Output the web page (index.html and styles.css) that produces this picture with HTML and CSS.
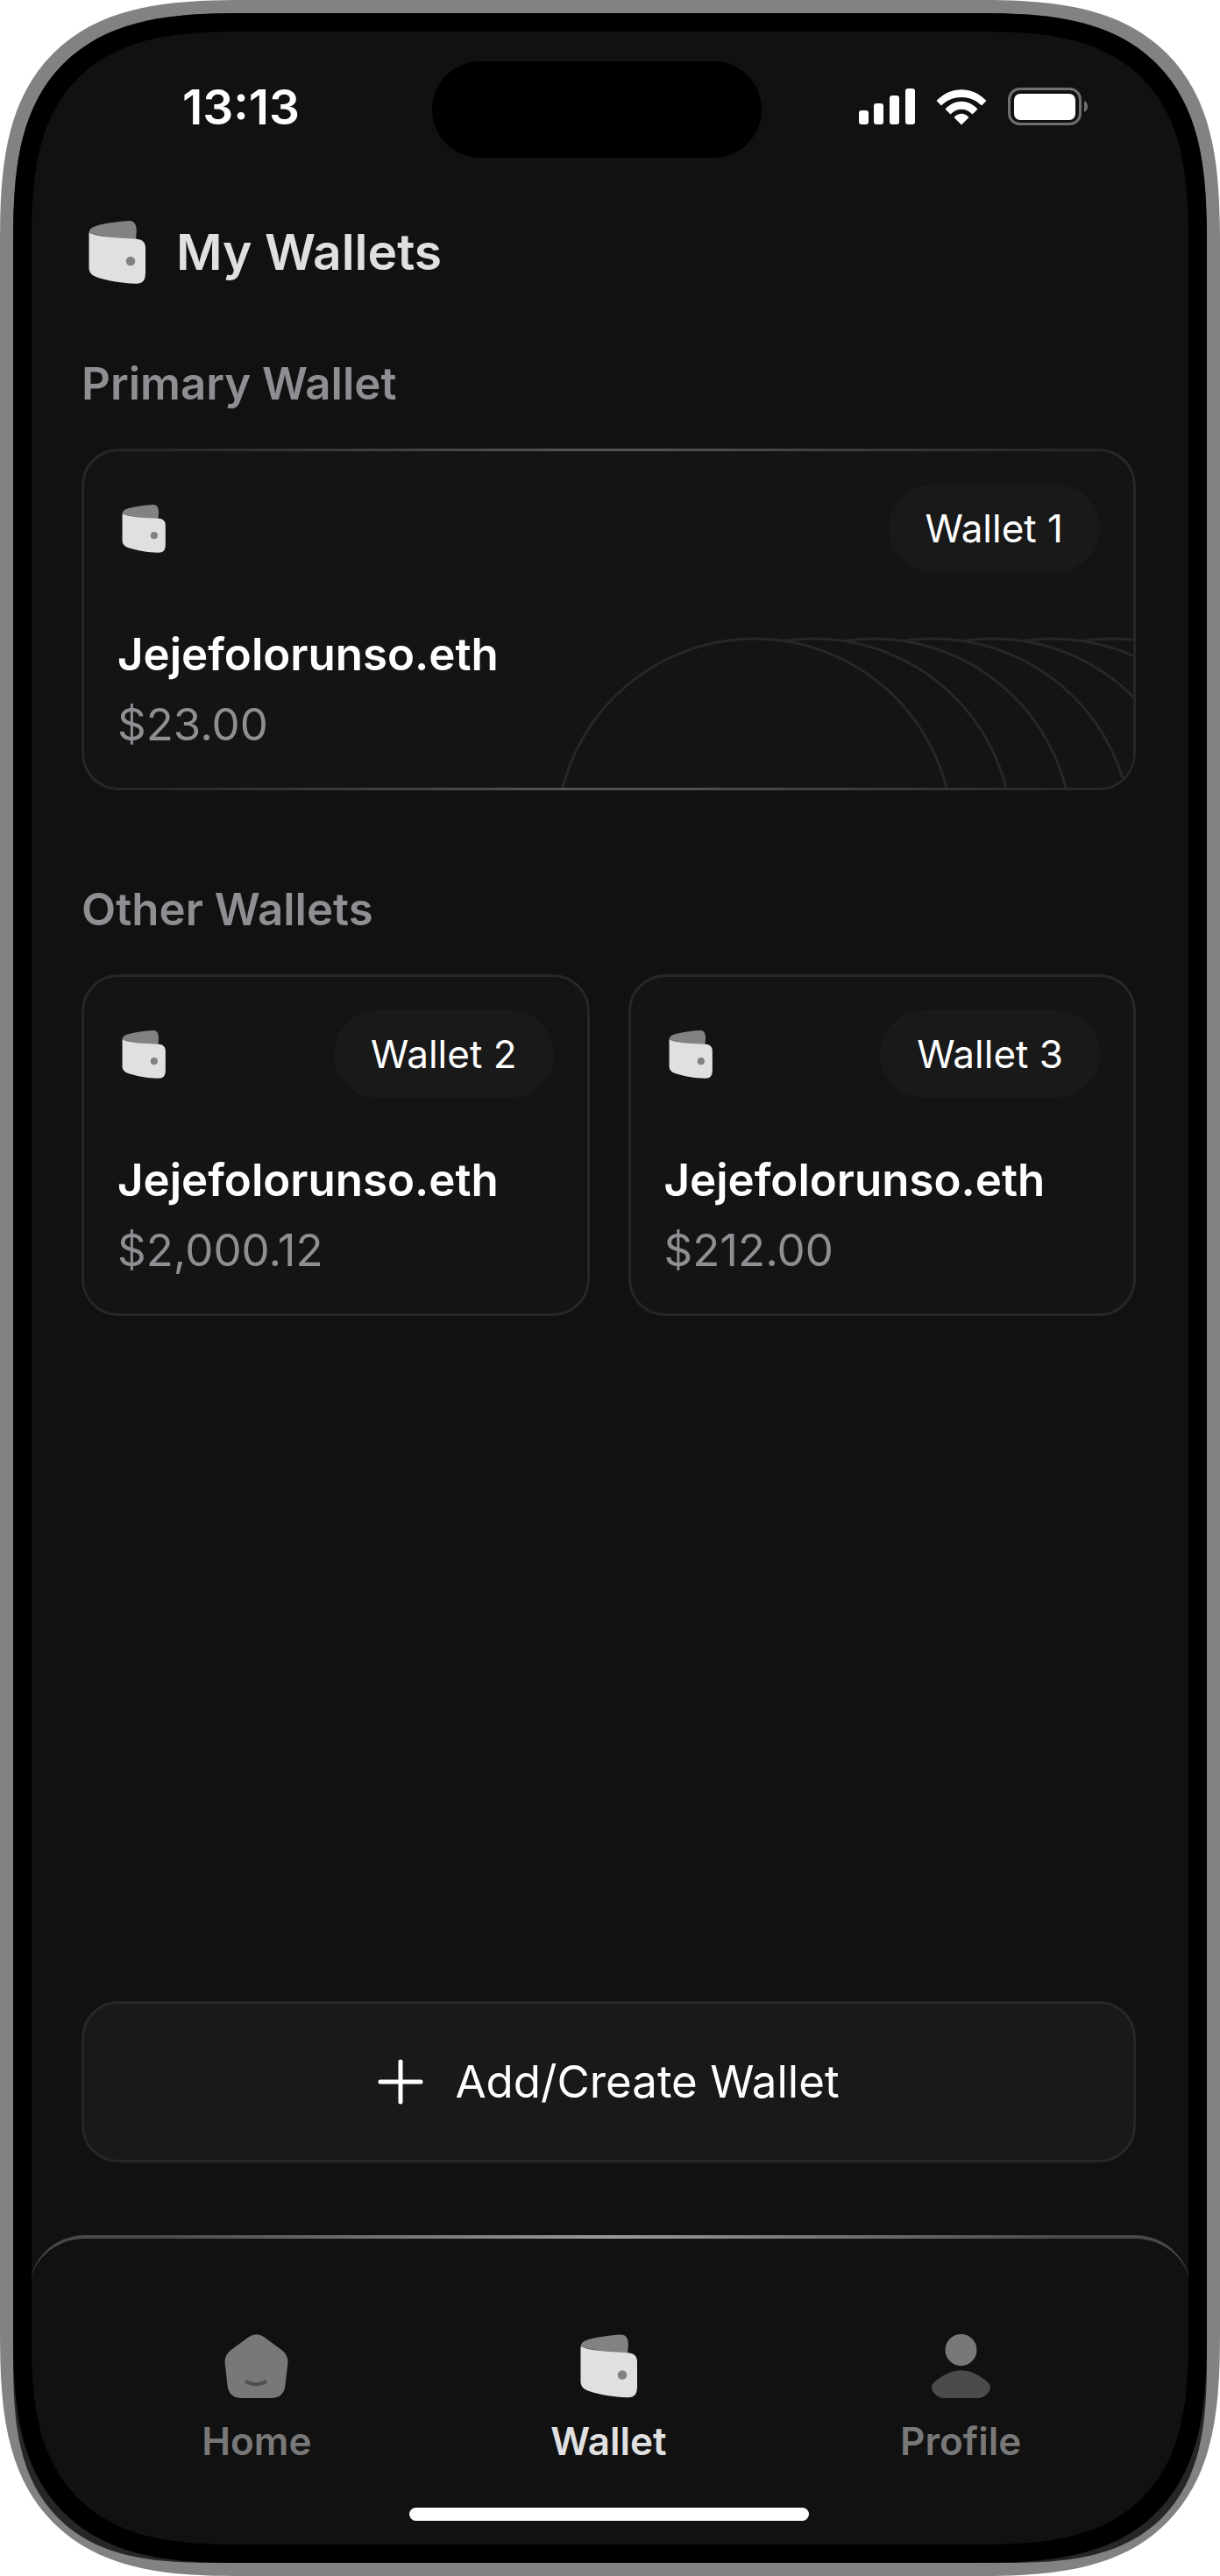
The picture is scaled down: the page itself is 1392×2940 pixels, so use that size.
FILE: index.html
```html
<!DOCTYPE html>
<html lang="en">
<head>
  <meta charset="UTF-8" />
  <meta name="viewport" content="width=device-width, initial-scale=1.0" />
  <title>My Wallets</title>
  <link rel="stylesheet" href="styles.css">
</head>
<body>
  <!-- shared icons -->
  <svg class="sprite" aria-hidden="true">
    <symbol id="icon-wallet" viewBox="0 0 65 72">
      <path fill="#828282" d="M.5 14C.7 9 4 7.500 9 5.700C20 2.400 35 .8 46 0C51.500-.2 54.800 3 54.800 12L54 22L28 20Z" />
      <path fill="#e0e0e0" d="M.5 13.700C10 17 20 18.500 29.500 19.300L55 20.700C62 21.500 65 25 65 31V59C65 68 62 71.800 54 71.700C38 71.200 22 68.500 10 64.500C3 62 .5 58.500 .5 53Z" />
      <circle cx="48" cy="46" r="5.300" fill="#828282" />
    </symbol>
  </svg>

  <div class="phone">
    <div class="rim">
      <div class="bezel">
        <div class="screen">
          <div class="status-bar">
            <span class="time">13:13</span>
            <div class="island"></div>
            <div class="status-icons">
              <svg width="64" height="44" viewBox="0 0 64 44" fill="#fff">
                <rect x="0" y="26" width="11" height="16" rx="3" />
                <rect x="17" y="18" width="11" height="24" rx="3" />
                <rect x="35" y="9" width="11" height="33" rx="3" />
                <rect x="53" y="1" width="11" height="41" rx="3" />
              </svg>
              <svg width="58" height="44" viewBox="0 0 58 44" fill="#fff">
                <path d="M1 14.500C17-2 41-2 57 14.500Q57.500 15 57 15.500L52.500 20Q52 20.500 51.500 20C39 8 19 8 6.500 20Q6 20.500 5.500 20L1 15.500Q.5 15 1 14.500Z" />
                <path d="M11 24C21.500 13 36.500 13 47 24Q47.500 24.500 47 25L42 30Q41.500 30.400 41 30C34 23 24 23 17 30Q16.500 30.400 16 30L11 25Q10.500 24.500 11 24Z" />
                <path d="M21 33.500C26 28.500 32 28.500 37 33.500Q37.500 34 37 34.500L29.500 42Q29 42.500 28.500 42L21 34.500Q20.500 34 21 33.500Z" />
              </svg>
              <svg width="92" height="44" viewBox="0 0 92 44">
                <rect x="1.500" y="1.500" width="81" height="40" rx="12" fill="none" stroke="#707070" stroke-width="3" />
                <rect x="7" y="7" width="70" height="30" rx="7" fill="#fff" />
                <path d="M87 15Q91 17 91 21.500T87 28Z" fill="#707070" />
              </svg>
            </div>
          </div>

          <main class="content">
            <header class="page-header">
              <svg class="header-icon"><use href="#icon-wallet" /></svg>
              <h1>My Wallets</h1>
            </header>

            <section class="wallet-section">
              <h2>Primary Wallet</h2>
              <article class="card card-primary">
                <svg class="rings" viewBox="0 0 656 173" fill="#141414" stroke="#272727" stroke-width="3" aria-hidden="true">
                  <circle cx="632" cy="229" r="226" />
                  <circle cx="564" cy="229" r="226" />
                  <circle cx="496" cy="229" r="226" />
                  <circle cx="428" cy="229" r="226" />
                  <circle cx="360" cy="229" r="226" />
                  <circle cx="292" cy="229" r="226" />
                  <circle cx="224" cy="229" r="226" />
                </svg>
                <div class="card-top">
                  <svg class="card-icon"><use href="#icon-wallet" /></svg>
                  <span class="pill">Wallet 1</span>
                </div>
                <h3>Jejefolorunso.eth</h3>
                <p>$23.00</p>
              </article>
            </section>

            <section class="wallet-section">
              <h2>Other Wallets</h2>
              <div class="wallet-grid">
                <article class="card">
                  <div class="card-top">
                    <svg class="card-icon"><use href="#icon-wallet" /></svg>
                    <span class="pill">Wallet 2</span>
                  </div>
                  <h3>Jejefolorunso.eth</h3>
                  <p>$2,000.12</p>
                </article>
                <article class="card">
                  <div class="card-top">
                    <svg class="card-icon"><use href="#icon-wallet" /></svg>
                    <span class="pill">Wallet 3</span>
                  </div>
                  <h3>Jejefolorunso.eth</h3>
                  <p>$212.00</p>
                </article>
              </div>
            </section>

            <button class="add-button" type="button">
              <svg width="52" height="52" viewBox="0 0 52 52" fill="none" stroke="#fff" stroke-width="5" stroke-linecap="round">
                <path d="M26 3V49M3 26H49" />
              </svg>
              Add/Create Wallet
            </button>
          </main>

          <nav class="tab-bar">
            <div class="tabs">
              <a class="tab" href="#home">
                <svg width="73" height="73" viewBox="0 0 73 73">
                  <path fill="#787878" d="M28 3Q36.500-2.500 45 3L66 18.500Q73 24 72.400 33L69.500 58Q68 73 53 73H20Q5 73 3.500 58L.6 33Q0 24 7 18.500Z" />
                  <path fill="none" stroke="#505050" stroke-width="4" d="M24 53.500Q36.500 61 48 53.500" />
                </svg>
                Home
              </a>
              <a class="tab active" href="#wallet" aria-current="page">
                <svg width="65" height="73"><use href="#icon-wallet" /></svg>
                Wallet
              </a>
              <a class="tab" href="#profile">
                <svg width="67" height="73" viewBox="0 0 67 73">
                  <circle cx="33.500" cy="18" r="18" fill="#787878" />
                  <path fill="#4b4b4b" d="M33.500 41.300C43 41.300 50 45 57 49.500C63 53.500 67 56.500 67 61C67 66 60 73 53 73H14C7 73 0 66 0 61C0 56.500 4 53.500 10 49.500C17 45 24 41.300 33.500 41.300Z" />
                </svg>
                Profile
              </a>
            </div>
            <div class="home-indicator"></div>
          </nav>
        </div>
      </div>
    </div>
  </div>
</body>
</html>
```
FILE: styles.css
```css
:root {
  --frame: #828282;
  --screen: #111111;
  --card: #141414;
  --raised: #191919;
  --line: #272727;
  --muted: #8e8e93;
  --light: #e0e0e0;
}

* {
  box-sizing: border-box;
}

body {
  margin: 0;
  background: #fff;
  color: #fff;
  font-family: Inter, "Liberation Sans", sans-serif;
}

h1,
h2,
h3,
p {
  margin: 0;
}

svg {
  display: block;
  flex-shrink: 0;
}

.sprite {
  position: absolute;
  width: 0;
  height: 0;
}

/* device frame */
.phone,
.rim,
.bezel,
.screen {
  display: flex;
  flex-direction: column;
}

.rim,
.bezel,
.screen {
  flex: 1;
}

.phone {
  min-height: 100vh;
  padding: 15px;
  background: var(--frame);
  border-radius: 212px;
}

.rim {
  background: #262626;
  border-radius: 200px 200px 176px 176px;
}

.bezel {
  padding: 21px;
  background: #000;
  border-radius: 200px;
}

.screen {
  overflow: hidden;
  background: var(--screen);
  border-radius: 184px;
}

@supports (corner-shape: superellipse(1.5)) {
  .phone,
  .rim,
  .bezel,
  .screen {
    corner-shape: superellipse(1.5);
  }

  .phone {
    border-radius: 280px;
  }

  .rim {
    border-radius: 265px 265px 236px 236px;
  }

  .bezel {
    border-radius: 265px;
  }

  .screen {
    border-radius: 244px;
  }
}

/* status bar */
.status-bar {
  display: grid;
  grid-template-columns: 1fr 376px 1fr;
  align-items: center;
  padding: 34px 30px 72px 0;
}

.time {
  padding: 0 0 6px 172px;
  font-size: 55px;
  font-weight: 600;
  line-height: 60px;
}

.island {
  height: 110px;
  border-radius: 55px;
  background: #000;
}

.status-icons {
  display: flex;
  justify-content: flex-end;
  gap: 24px;
  padding: 0 84px 6px 0;
}

/* content */
.content {
  flex: 1;
  display: flex;
  flex-direction: column;
  padding: 0 60px 83px 57px;
}

.page-header {
  display: flex;
  align-items: center;
  gap: 35px;
  padding-left: 8px;
  margin-bottom: 84px;
  color: var(--light);
}

.page-header h1 {
  font-size: 57px;
  font-weight: 600;
  line-height: 72px;
}

.header-icon {
  width: 65px;
  height: 72px;
}

.wallet-section {
  margin-bottom: 106px;
}

.wallet-section h2 {
  margin-bottom: 44px;
  color: var(--muted);
  font-size: 51px;
  font-weight: 600;
  line-height: 60px;
}

.wallet-grid {
  display: grid;
  grid-template-columns: 1fr 1fr;
  gap: 44px;
}

.card {
  padding: 38px 38px 42px;
  border: 3px solid var(--line);
  border-radius: 42px;
  background: var(--card);
}

.card-primary {
  position: relative;
  overflow: hidden;
  border-color: transparent;
  background:
    linear-gradient(var(--card), var(--card)) padding-box,
    linear-gradient(90deg, var(--line) 8%, #525252 45%, #525252 55%, var(--line) 92%) border-box;
}

.rings {
  position: absolute;
  right: 0;
  bottom: 0;
  width: 656px;
  height: 173px;
}

.card-top {
  position: relative;
  display: flex;
  align-items: center;
  justify-content: space-between;
  margin-bottom: 64px;
}

.card-icon {
  width: 50px;
  height: 55px;
  margin-left: 5px;
}

.pill {
  padding: 25px 42px;
  border-radius: 50px;
  background: var(--raised);
  font-size: 44px;
  line-height: 50px;
}

.card h3 {
  position: relative;
  margin-bottom: 20px;
  font-size: 51px;
  font-weight: 600;
  line-height: 60px;
}

.card p {
  position: relative;
  color: var(--muted);
  font-size: 51px;
  line-height: 60px;
}

.add-button {
  display: flex;
  align-items: center;
  justify-content: center;
  gap: 36px;
  margin-top: auto;
  padding: 59px 20px;
  border: 3px solid var(--line);
  border-radius: 42px;
  background: var(--raised);
  color: #fff;
  font: inherit;
  font-size: 51px;
  line-height: 60px;
  cursor: pointer;
}

/* bottom tabs */
.tab-bar {
  margin: 0 -3px;
  padding: 109px 62px 27px 59px;
  border-top: 4px solid transparent;
  border-radius: 64px 64px 0 0;
  background:
    linear-gradient(var(--screen), var(--screen)) padding-box,
    linear-gradient(90deg, #484848 10%, #999 50%, #484848 90%) border-box;
}

.tabs {
  display: grid;
  grid-template-columns: repeat(3, 1fr);
}

.tab {
  display: flex;
  flex-direction: column;
  align-items: center;
  gap: 24px;
  color: #787878;
  font-size: 44px;
  font-weight: 600;
  line-height: 50px;
  text-decoration: none;
}

.tab.active {
  color: var(--light);
}

.home-indicator {
  width: 456px;
  height: 15px;
  margin: 51px auto 0;
  border-radius: 8px;
  background: #fff;
}
```
